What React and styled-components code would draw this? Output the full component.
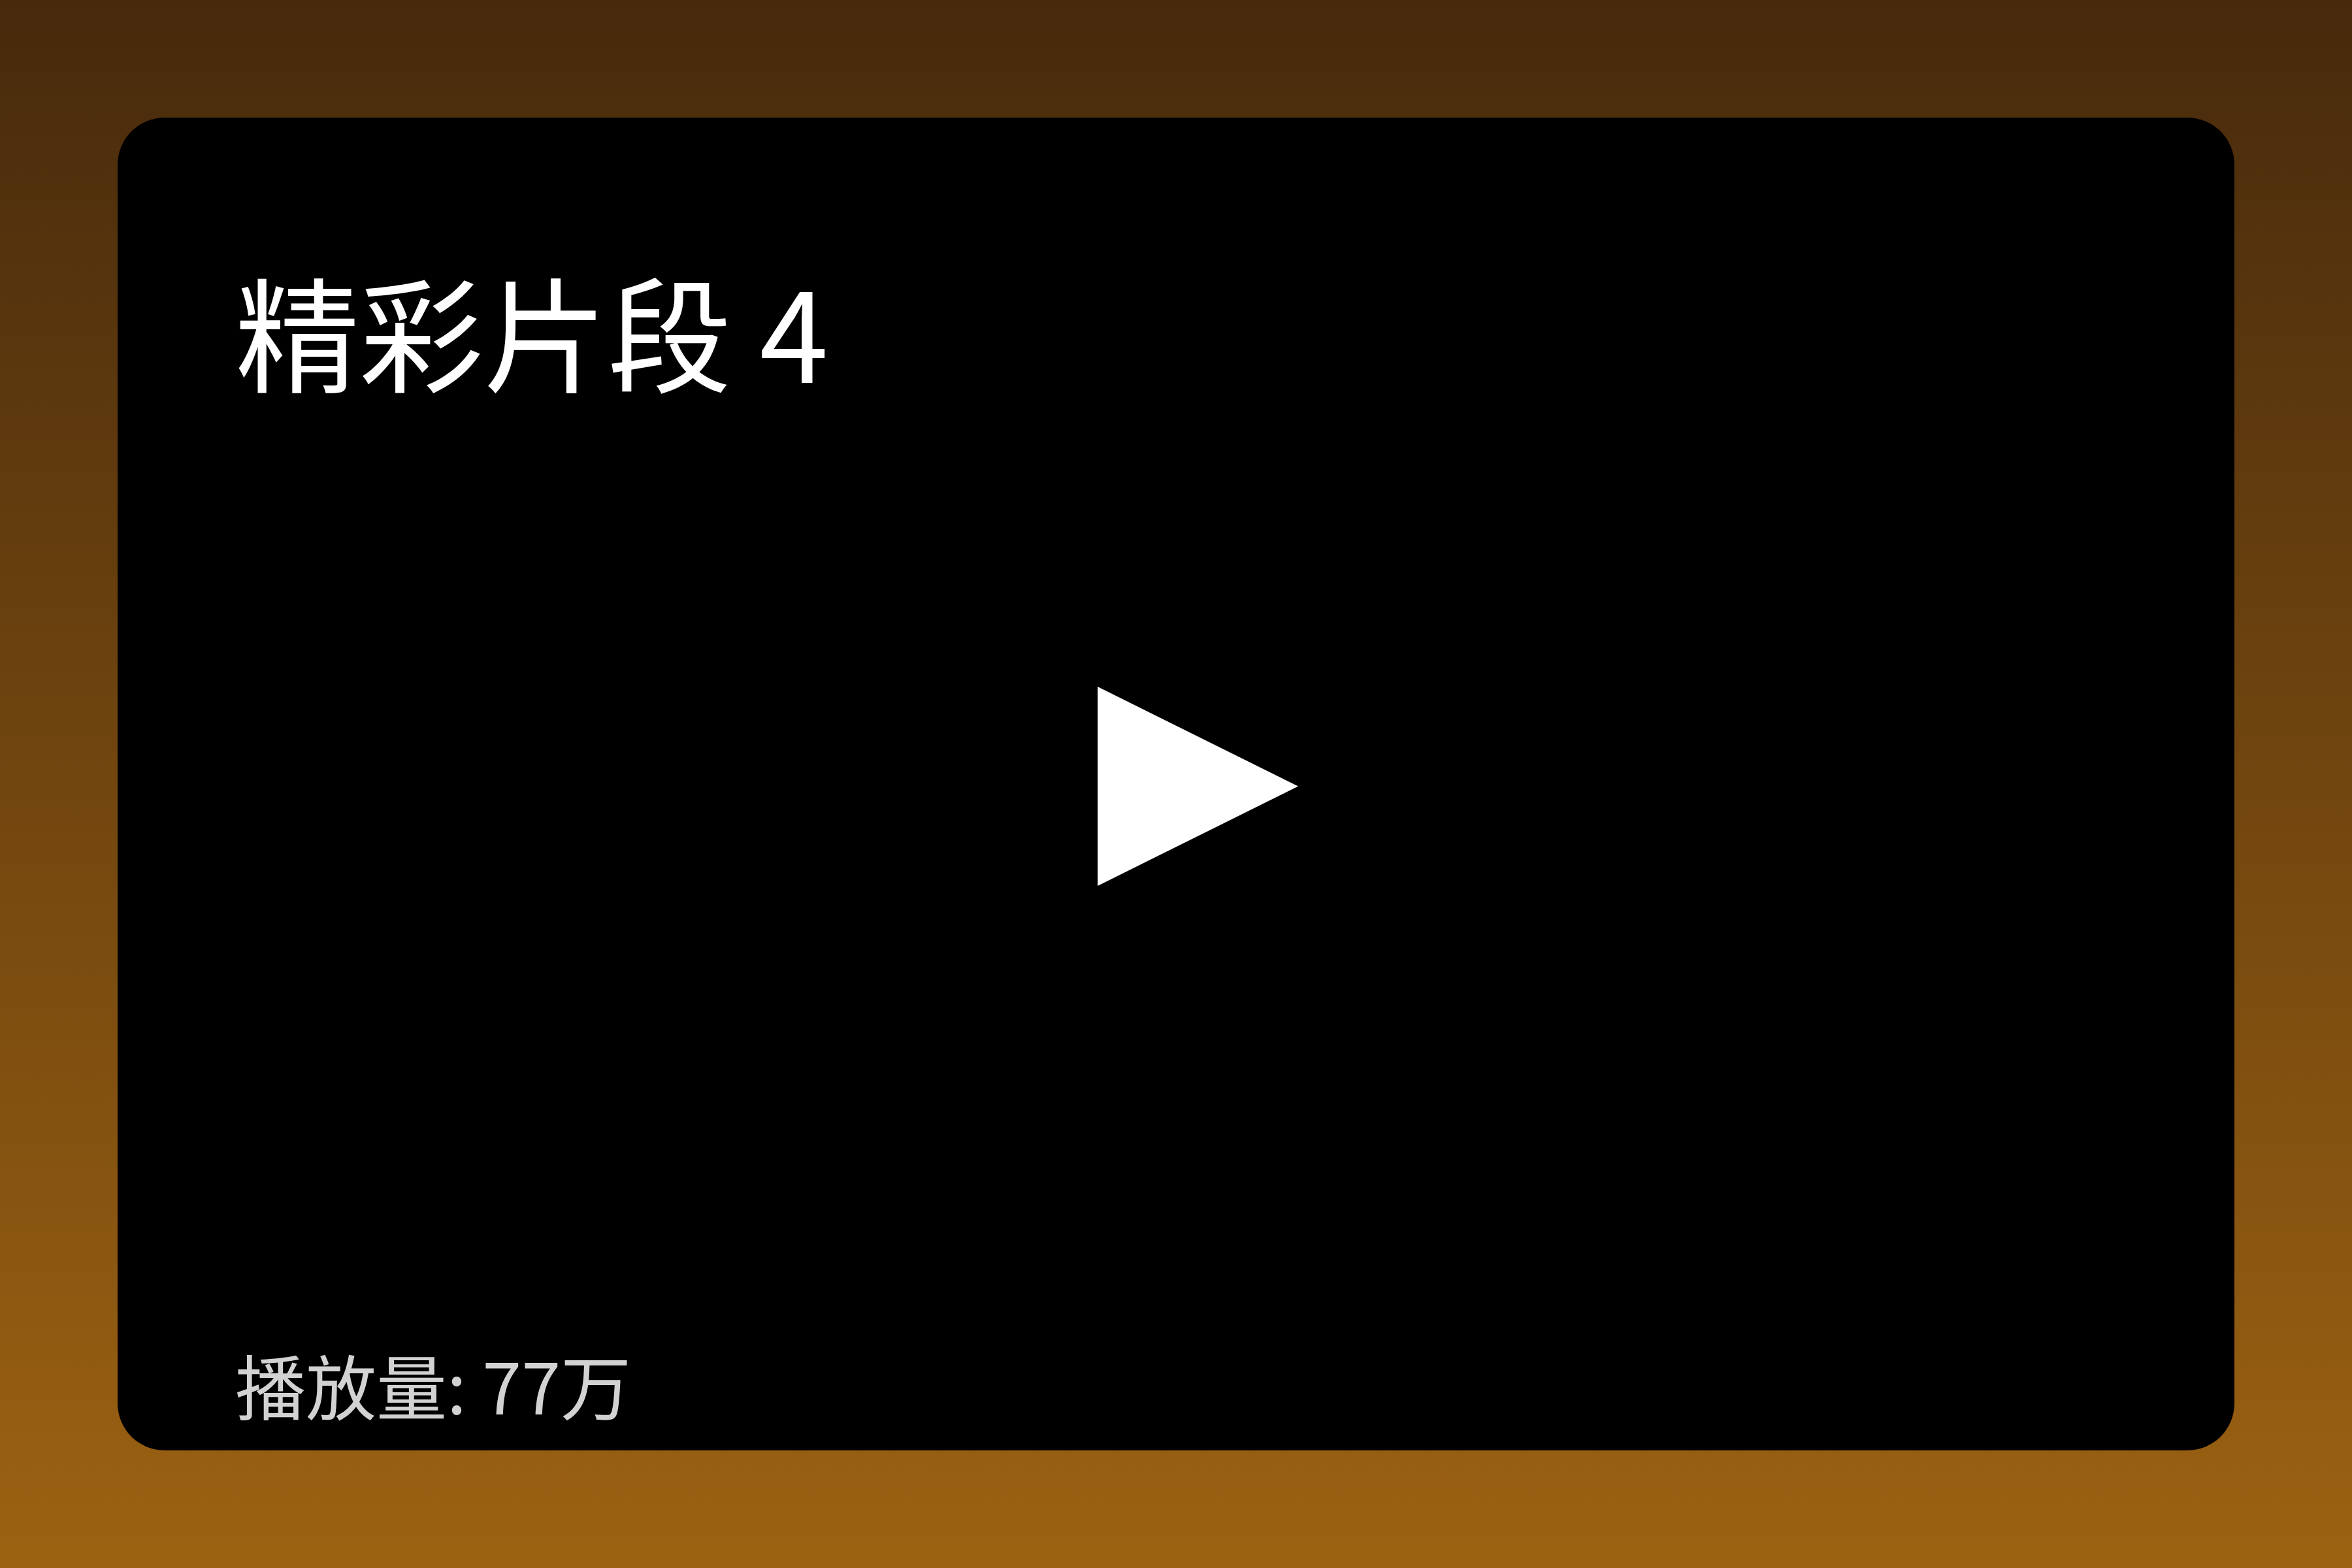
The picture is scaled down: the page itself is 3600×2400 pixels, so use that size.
import React from "react";
import styled, { createGlobalStyle } from "styled-components";

const GlobalStyle = createGlobalStyle`
  html, body {
    margin: 0;
    padding: 0;
    height: 100%;
  }
  body {
    font-family: "Noto Sans CJK SC", "Noto Sans", sans-serif;
  }
  #root {
    height: 100%;
  }
`;

const Page = styled.div`
  box-sizing: border-box;
  width: 100%;
  height: 100vh;
  padding: 180px;
  background: linear-gradient(180deg, #472a0c 0%, #9c6212 100%);
  display: flex;
`;

const Card = styled.section`
  flex: 1;
  display: grid;
  background: #000;
  border-radius: 72px;
  overflow: hidden;
`;

const Content = styled.div`
  grid-area: 1 / 1;
  display: flex;
  flex-direction: column;
  justify-content: space-between;
  padding: 180px 180px 24px 180px;
`;

const Title = styled.h2`
  margin: 0;
  font-size: 190px;
  font-weight: 400;
  line-height: 275px;
  color: #ffffff;
  margin-top: 6px;
`;

const Views = styled.p`
  margin: 0;
  font-size: 108px;
  line-height: 156px;
  color: #d2d2d2;
`;

const PlayLayer = styled.div`
  grid-area: 1 / 1;
  display: flex;
  align-items: center;
  justify-content: center;
  pointer-events: none;
`;

const PlayIcon = styled.svg`
  width: 374px;
  height: 305px;
  display: block;
  margin-top: 6px;
`;

export default function App() {
  return (
    <>
      <GlobalStyle />
      <Page>
        <Card>
          <Content>
            <Title>精彩片段 4</Title>
            <Views>播放量: 77万</Views>
          </Content>
          <PlayLayer>
            <PlayIcon viewBox="0 0 374 305" aria-hidden="true">
              <polygon points="67,0 374,152.5 67,305" fill="#ffffff" />
            </PlayIcon>
          </PlayLayer>
        </Card>
      </Page>
    </>
  );
}
